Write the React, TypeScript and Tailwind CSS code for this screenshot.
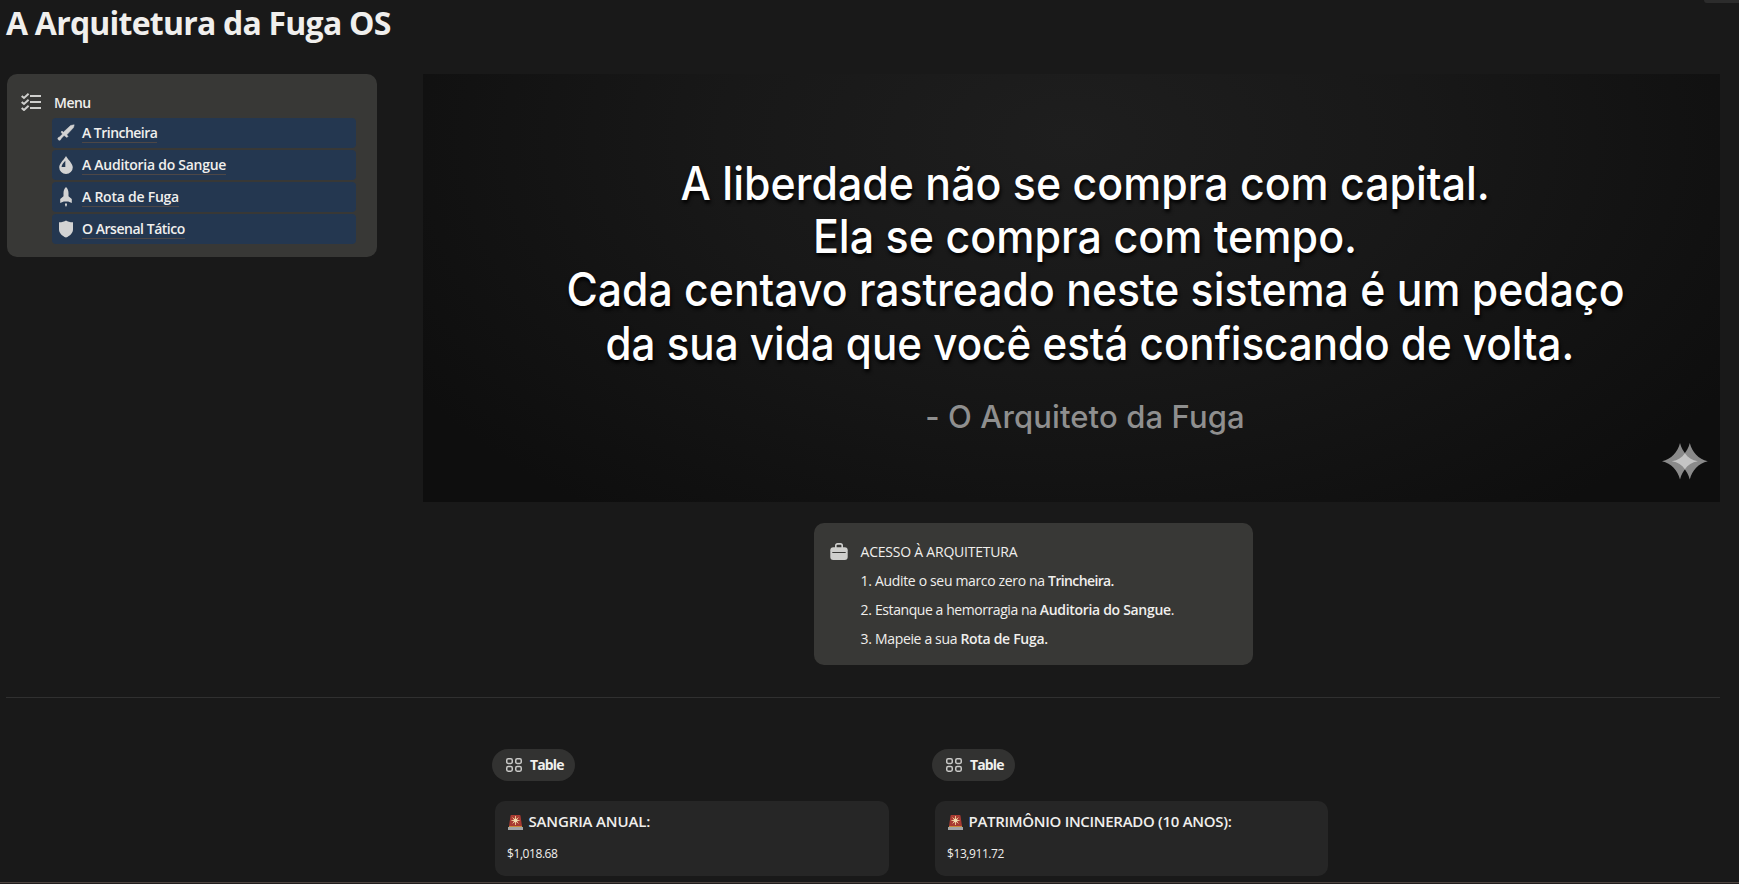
import type { ReactNode } from 'react';

function ChecklistIcon() {
    return (
        <svg width="20" height="18" viewBox="0 0 20 18" fill="none" stroke="#cfcfcd" strokeWidth="2">
            <path d="M9 3h11M9 9h11M9 15h11" strokeWidth="2.2" />
            <path d="M.7 2.900 3 5 7.600.8M.7 8.900 3 11l4.600-4.200M.7 14.900 3 17l4.600-4.200" />
        </svg>
    );
}

function SwordIcon() {
    return (
        <svg width="18" height="18" viewBox="0 0 18 18" fill="#d3d3d3">
            <path d="M17.200.8 13.600 1.500 6.300 8.300 5 7 4 8l1.500 2.100-3 3-1.200.4a1.500 1.500 0 1 0 2.300 2.200l.6-1.300 2.900-2.900L10 13.400l1-1-1.200-1.600 6.700-7.200z" stroke="#d3d3d3" strokeWidth=".5" />
        </svg>
    );
}

function DropIcon() {
    return (
        <svg width="18" height="18" viewBox="0 0 18 18">
            <path d="M9 0C8 2.600 2.200 7.300 2.200 11.200a6.800 6.800 0 0 0 13.600 0C15.800 7.300 10 2.600 9 0z" fill="#d3d3d3" />
            <path d="M8.300 4.700C6 7.200 4.600 9 4.600 11h3.700z" fill="#243750" />
        </svg>
    );
}

function RocketIcon() {
    return (
        <svg width="18" height="20" viewBox="0 0 18 20" fill="#d3d3d3">
            <path d="M9 0C7.300 1.500 6.500 3.500 6.500 6v3.200L3.200 12v4l3.600-1.400h4.400l3.600 1.400v-4l-3.300-2.800V6C11.500 3.500 10.700 1.500 9 0z" />
            <path d="M9 16c-.8.500-1 1-1 1.600 0 .8.500 1.400 1 2.400.5-1 1-1.600 1-2.400 0-.6-.2-1.100-1-1.600z" />
        </svg>
    );
}

function ShieldIcon() {
    return (
        <svg width="18" height="18" viewBox="0 0 18 18" fill="#d3d3d3">
            <path d="M9 .5c1.700 1.100 4 1.700 7 1.800v6.900c0 3.800-3 6.700-7 8.300-4-1.600-7-4.500-7-8.300V2.300c3-.1 5.300-.7 7-1.800z" />
        </svg>
    );
}

function BriefcaseIcon() {
    return (
        <svg width="18" height="18" viewBox="0 0 18 18">
            <path d="M5.800 5V2.600C5.800 1.500 6.500.9 7.500.9h3c1 0 1.700.6 1.700 1.700V5" fill="none" stroke="#cfcfcd" strokeWidth="1.600" />
            <rect x=".3" y="4.200" width="17.400" height="12.800" rx="3" fill="#cfcfcd" />
            <path d="M2.300 9.500h13.400" stroke="#383836" strokeWidth="1" />
        </svg>
    );
}

function GalleryIcon() {
    return (
        <svg width="16" height="14" viewBox="0 0 16 14" fill="none" stroke="#c8c8c6" strokeWidth="1.500">
            <rect x=".75" y=".75" width="5.500" height="4.700" rx="1.400" />
            <rect x="9.750" y=".75" width="5.500" height="4.700" rx="1.400" />
            <rect x=".75" y="8.550" width="5.500" height="4.700" rx="1.400" />
            <rect x="9.750" y="8.550" width="5.500" height="4.700" rx="1.400" />
        </svg>
    );
}

function SirenIcon() {
    return (
        <svg width="15" height="15" viewBox="0 0 15 15">
            <path d="M2.500.7Q2.600 0 3.300 0h8.400q.7 0 .8.700L14 11H1z" fill="#a83a32" />
            <path d="M7.500 1v9M3.500 5.500h8M4.600 2.600l5.800 5.800M10.400 2.600 4.600 8.400" stroke="#e8c48e" strokeWidth="1" />
            <circle cx="7.500" cy="5.500" r="2.100" fill="#f3dcb0" />
            <rect x="1" y="11" width="13" height="1" fill="#c98a3c" />
            <rect x="0" y="12" width="15" height="3" fill="#a3a5a6" />
        </svg>
    );
}

function SparkMark() {
    return (
        <svg width="46" height="37" viewBox="0 0 46 37">
            <path d="M18 0c2.500 9.500 8.500 16 18 18.300C26.500 20.600 20.500 27 18 36.600 15.500 27 9.500 20.600 0 18.300 9.500 16 15.500 9.500 18 0z" fill="#8a8a8a" />
            <path d="M27.800 0c2.500 9.500 8.500 16 18 18.300-9.500 2.300-15.500 8.700-18 18.300-2.500-9.600-8.500-16-18-18.300 9.500-2.300 15.500-8.800 18-18.300z" fill="#8a8a8a" />
            <path d="M22.900 10.300c3 4.300 7 7 13 8-6 1-10 3.700-13 8-3-4.300-7-7-13-8 6-1 10-3.700 13-8z" fill="#c4c4c4" />
        </svg>
    );
}

const MENU: { label: string; icon: ReactNode; tracking: string }[] = [
    { label: 'A Trincheira', icon: <SwordIcon />, tracking: 'tracking-[-0.52px]' },
    { label: 'A Auditoria do Sangue', icon: <DropIcon />, tracking: 'tracking-[-0.27px]' },
    { label: 'A Rota de Fuga', icon: <RocketIcon />, tracking: 'tracking-[-0.24px]' },
    { label: 'O Arsenal Tático', icon: <ShieldIcon />, tracking: 'tracking-[-0.47px]' },
];

function MetricView({ title, value, titleClass, valueClass, cardClass }: {
    title: string;
    value: string;
    titleClass: string;
    valueClass: string;
    cardClass: string;
}) {
    return (
        <div className="w-[440px]">
            <div className="flex h-8 w-[83px] items-center rounded-full bg-[#323231] pl-3.5">
                <GalleryIcon />
                <span className="ml-2 text-sm font-bold tracking-[-0.85px] text-[#f0efed]">Table</span>
            </div>
            <div className={`mt-5 ml-[3px] h-[75px] rounded-[10px] bg-[#262626] px-3 pt-[11px] ${cardClass}`}>
                <div className="flex h-5 items-center">
                    <span className="ml-px"><SirenIcon /></span>
                    <span className={`ml-[5.5px] text-[15px] font-semibold whitespace-nowrap text-[#f0efed] ${titleClass}`}>{title}</span>
                </div>
                <div className={`mt-3 text-xs leading-5 text-[#f0efed] ${valueClass}`}>{value}</div>
            </div>
        </div>
    );
}

export default function App() {
    return (
        <div className="relative flex h-[884px] w-full flex-col overflow-hidden bg-[#191919] pl-[7px] font-['Open_Sans',sans-serif] text-sm text-[#f0efed]">
            <div className="absolute top-0 right-0 h-[3px] w-[35px] rounded-bl-md bg-[#2c2c2c]" />
            <h1 className="-ml-px h-[74px] text-[32px] leading-[45px] font-bold tracking-[-0.78px]">A Arquitetura da Fuga OS</h1>

            <div className="flex items-start">
                {/* Menu */}
                <div className="flex h-[183px] w-[370px] shrink-0 rounded-[10px] bg-[#383836] pl-3.5">
                    <div className="mt-[19px] w-[31px]"><ChecklistIcon /></div>
                    <div className="flex-1 pr-[21px]">
                        <div className="mt-[18px] mb-1 pl-0.5 leading-[22px] font-semibold tracking-[-0.5px]">Menu</div>
                        <div className="flex flex-col gap-0.5">
                            {MENU.map(item => (
                                <div key={item.label} className="flex h-[30px] items-center rounded-[4px] bg-[#243750] pl-[5px]">
                                    {item.icon}
                                    <span className={`mt-px ml-[7px] h-[19px] border-b border-[#4d4747] leading-[17px] font-semibold ${item.tracking}`}>{item.label}</span>
                                </div>
                            ))}
                        </div>
                    </div>
                </div>

                {/* Banner */}
                <div className="relative ml-[46px] h-[428px] w-[1297px] bg-[#0e0e0e] bg-[radial-gradient(ellipse_60%_110%_at_50%_15%,#1e1e1e_0%,#181818_45%,#0e0e0e_100%)] pl-[27px] font-['Inter',sans-serif]">
                    <div className="mt-[83px] flex flex-col items-center text-[46px] leading-[53.2px] font-medium whitespace-nowrap text-white [text-shadow:1px_3px_4px_#000]">
                        <div className="scale-x-[0.932]">A liberdade não se compra com capital.</div>
                        <div className="ml-px scale-x-[0.935]">Ela se compra com tempo.</div>
                        <div className="ml-[20px] scale-x-[0.929]">Cada centavo rastreado neste sistema é um pedaço</div>
                        <div className="ml-[10px] scale-x-[0.916]">da sua vida que você está confiscando de volta.</div>
                    </div>
                    <div className="mt-[25px] text-center text-[31px] leading-[43px] font-medium tracking-[0.12px] text-[#8f8f8f]">- O Arquiteto da Fuga</div>
                    <div className="absolute right-[12.500px] bottom-[22px]"><SparkMark /></div>
                </div>
            </div>

            {/* Instructions */}
            <div className="mt-[21px] ml-[807px] flex h-[142px] w-[439px] rounded-[10px] bg-[#383836] pt-4 pl-[15.5px]">
                <div className="mt-1 w-[31px]"><BriefcaseIcon /></div>
                <div className="flex flex-col gap-2 leading-[21px] whitespace-pre">
                    <div className="mt-0.5 tracking-[-0.22px]">ACESSO À ARQUITETURA</div>
                    <div className="flex">
                        <span className="w-[14.5px] tracking-[-0.3px]">1.</span>
                        <span className="tracking-[-0.34px]">Audite o seu marco zero na </span>
                        <b className="font-semibold tracking-[-0.62px]">Trincheira.</b>
                    </div>
                    <div className="flex">
                        <span className="w-[14.5px] tracking-[-0.3px]">2.</span>
                        <span className="tracking-[-0.43px]">Estanque a hemorragia na </span>
                        <b className="font-semibold tracking-[-0.31px]">Auditoria do Sangue</b>.
                    </div>
                    <div className="flex">
                        <span className="w-[14.5px] tracking-[-0.3px]">3.</span>
                        <span className="tracking-[-0.35px]">Mapeie a sua </span>
                        <b className="font-semibold tracking-[-0.3px]">Rota de Fuga.</b>
                    </div>
                </div>
            </div>

            <div className="mt-8 -ml-px h-px w-[1714px] shrink-0 bg-[#303030]" />

            <div className="mt-[51px] ml-[485px] flex">
                <MetricView title="SANGRIA ANUAL:" value="$1,018.68" titleClass="tracking-[-0.15px]" valueClass="tracking-[-0.42px]" cardClass="w-[394px]" />
                <MetricView title="PATRIMÔNIO INCINERADO (10 ANOS):" value="$13,911.72" titleClass="tracking-[-0.3px]" valueClass="tracking-[-0.42px]" cardClass="w-[393px]" />
            </div>

            <div className="absolute inset-x-0 bottom-0 h-0.5 border-t border-[#4d4440] bg-[#221f1e]" />
        </div>
    );
}
